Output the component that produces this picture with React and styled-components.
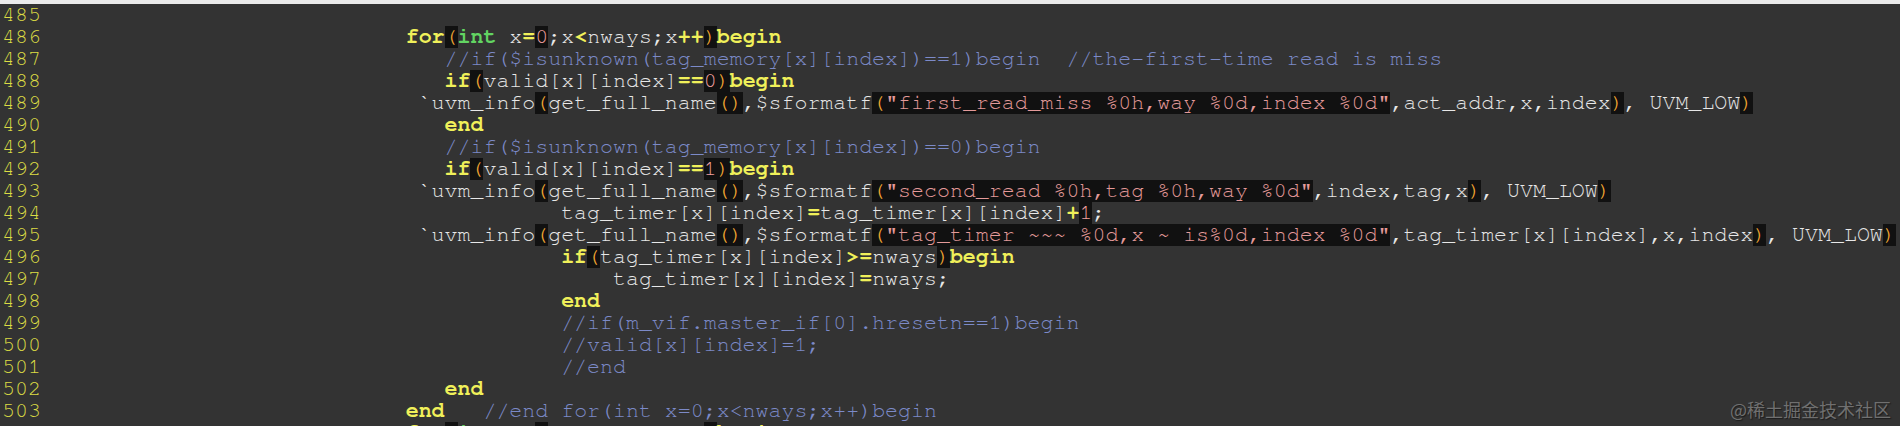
import React from 'react';
import styled, { createGlobalStyle, css } from 'styled-components';

const Global = createGlobalStyle`
  html, body { margin: 0; padding: 0; background: #333333; }
  body { overflow: hidden; }
`;

const Editor = styled.div`
  position: relative;
  width: 1900px;
  height: 426px;
  overflow: hidden;
  background: #333333;
  display: flex;
  flex-direction: column;
`;

const TopBar = styled.div`
  flex: 0 0 4px;
  background: #ebebeb;
`;

const Lines = styled.div`
  display: flex;
  flex-direction: column;
  font-family: "Nimbus Mono PS", "FreeMono", "Liberation Mono", "Courier New", monospace;
  font-size: 21.6px;
  line-height: 22px;
  white-space: pre;
`;

const Line = styled.div`
  display: flex;
  height: 22px;
  flex: 0 0 22px;
`;

const LineNo = styled.span`
  flex: 0 0 3ch;
  padding-left: 2px;
  margin-right: 15px;
  color: #dcdc44;
`;

const Code = styled.span`
  color: #e8e8e8;
  padding-left: ${(p) => p.$indent}ch;
`;

const hl = css`
  display: inline-block;
  height: 22px;
  vertical-align: top;
  background: #111111;
`;

const kinds = {
  plain: css``,
  kw: css`color: #f0f05a; font-weight: bold;`,
  op: css`color: #f0f05a; font-weight: bold;`,
  type: css`color: #62d462; font-weight: bold;`,
  comment: css`color: #7c8ac8;`,
  paren: css`${hl} color: #f0a632;`,
  num: css`${hl} color: #f2a0a0;`,
  string: css`${hl} color: #e49a9a;`,
};

const Tok = styled.span`
  ${(p) => kinds[p.$kind]}
`;

const Watermark = styled.div`
  position: absolute;
  right: 9px;
  bottom: 6px;
  font-family: "Noto Sans CJK SC", "Noto Sans", sans-serif;
  font-size: 18px;
  line-height: 22px;
  color: #707070;
  text-shadow: 1px 1px 1px #1c1c1c;
`;

const LINES = [
  [485, 0, ''],
  [486, 27, 'for(int x=0;x<nways;x++)begin'],
  [487, 30, '//if($isunknown(tag_memory[x][index])==1)begin  //the-first-time read is miss'],
  [488, 30, 'if(valid[x][index]==0)begin'],
  [489, 28, '`uvm_info(get_full_name(),$sformatf("first_read_miss %0h,way %0d,index %0d",act_addr,x,index), UVM_LOW)'],
  [490, 30, 'end'],
  [491, 30, '//if($isunknown(tag_memory[x][index])==0)begin'],
  [492, 30, 'if(valid[x][index]==1)begin'],
  [493, 28, '`uvm_info(get_full_name(),$sformatf("second_read %0h,tag %0h,way %0d",index,tag,x), UVM_LOW)'],
  [494, 39, 'tag_timer[x][index]=tag_timer[x][index]+1;'],
  [495, 28, '`uvm_info(get_full_name(),$sformatf("tag_timer ~~~ %0d,x ~ is%0d,index %0d",tag_timer[x][index],x,index), UVM_LOW)'],
  [496, 39, 'if(tag_timer[x][index]>=nways)begin'],
  [497, 43, 'tag_timer[x][index]=nways;'],
  [498, 39, 'end'],
  [499, 39, '//if(m_vif.master_if[0].hresetn==1)begin'],
  [500, 39, '//valid[x][index]=1;'],
  [501, 39, '//end'],
  [502, 30, 'end'],
  [503, 27, 'end   //end for(int x=0;x<nways;x++)begin'],
  [504, 27, 'for(int x=0;x<nways;x++)begin'],
];

const KEYWORDS = new Set(['for', 'if', 'begin', 'end']);

function tokenize(s) {
  const out = [];
  const push = (kind, text) => {
    const last = out[out.length - 1];
    if (last && last.kind === kind && kind !== 'paren') last.text += text;
    else out.push({ kind, text });
  };
  let i = 0;
  while (i < s.length) {
    const rest = s.slice(i);
    let m;
    if (rest.startsWith('//')) {
      push('comment', rest);
      break;
    }
    if (s[i] === '"') {
      const j = s.indexOf('"', i + 1);
      push('string', s.slice(i, j + 1));
      i = j + 1;
      continue;
    }
    if ((m = rest.match(/^[A-Za-z_$`][A-Za-z0-9_$]*/))) {
      const w = m[0];
      push(KEYWORDS.has(w) ? 'kw' : w === 'int' ? 'type' : 'plain', w);
      i += w.length;
      continue;
    }
    if ((m = rest.match(/^[0-9]+/))) {
      push('num', m[0]);
      i += m[0].length;
      continue;
    }
    const c = s[i];
    if (c === '(' || c === ')') push('paren', c);
    else if ('=<>+'.includes(c)) push('op', c);
    else push('plain', c);
    i += 1;
  }
  return out;
}

export default function App() {
  return (
    <>
      <Global />
      <Editor>
        <TopBar />
        <Lines>
          {LINES.map(([n, indent, text]) => (
            <Line key={n}>
              <LineNo>{n}</LineNo>
              <Code $indent={indent}>
                {tokenize(text).map((t, k) => (
                  <Tok key={k} $kind={t.kind}>{t.text}</Tok>
                ))}
              </Code>
            </Line>
          ))}
        </Lines>
        <Watermark>@稀土掘金技术社区</Watermark>
      </Editor>
    </>
  );
}
